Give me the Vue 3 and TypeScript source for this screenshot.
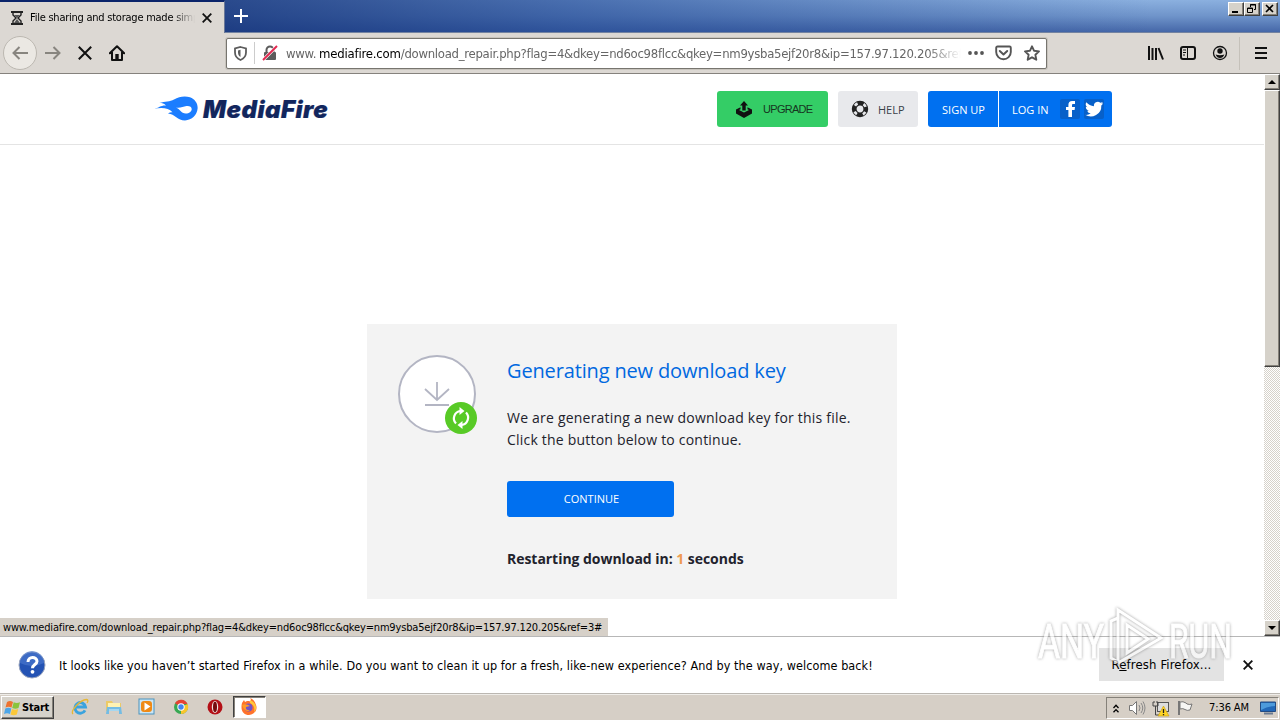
<script setup lang="ts">
import { ref } from 'vue'

const tabTitle = 'File sharing and storage made simple'
const seconds = ref(1)
const urlTail = '/download_repair.php?flag=4&dkey=nd6oc98flcc&qkey=nm9ysba5ejf20r8&ip=157.97.120.205&ref=3'
const statusUrl = 'www.mediafire.com/download_repair.php?flag=4&dkey=nd6oc98flcc&qkey=nm9ysba5ejf20r8&ip=157.97.120.205&ref=3#'
</script>

<template>
  <div class="screen">
    <header class="titlebar">
      <div class="tab">
        <svg class="hourglass" width="12" height="14" viewBox="0 0 12 14"><path d="M0 1h12M0 13h12" stroke="#222" stroke-width="2"/><path d="M2 2v2l3 3-3 3v2M10 2v2L7 7l3 3v2" fill="none" stroke="#222" stroke-width="1.4"/><path d="M3 4h6L6 7zM3 12l3-4 3 4z" fill="#555"/></svg>
        <span class="tab-title">{{ tabTitle }}</span>
        <svg class="tab-close" width="10" height="10" viewBox="0 0 10 10"><path d="M.7.7l8.6 8.6M9.3.7L.7 9.3" stroke="#111" stroke-width="1.8"/></svg>
      </div>
      <svg class="plus" width="14" height="14" viewBox="0 0 14 14"><path d="M7 0v14M0 7h14" stroke="#fff" stroke-width="2"/></svg>
      <div class="win-buttons">
        <span class="bevel"><svg width="12" height="10" viewBox="0 0 12 10"><path d="M2 8h6" stroke="#000" stroke-width="2"/></svg></span>
        <span class="bevel"><svg width="12" height="10" viewBox="0 0 12 10"><path d="M4.500 3V.5h5v5H8M4 1h6M1.500 4h5v4.500h-5zM1 4.500h6" fill="none" stroke="#000"/></svg></span>
        <span class="bevel last"><svg width="12" height="10" viewBox="0 0 12 10"><path d="M2 1l7 7M9 1L2 8" stroke="#000" stroke-width="1.6"/></svg></span>
      </div>
    </header>

    <nav class="toolbar">
      <span class="back"><svg width="16" height="14" viewBox="0 0 16 14"><path d="M16 7H1.500M7.500 1l-6 6 6 6" fill="none" stroke="#88857f" stroke-width="2"/></svg></span>
      <svg class="forward" width="16" height="14" viewBox="0 0 16 14"><path d="M0 7h14.500M8.500 1l6 6-6 6" fill="none" stroke="#88857f" stroke-width="2"/></svg>
      <svg class="stop" width="14" height="14" viewBox="0 0 14 14"><path d="M.8.8l12.400 12.400M13.200.8L.8 13.200" stroke="#111" stroke-width="2"/></svg>
      <svg class="home" width="16" height="16" viewBox="0 0 16 16"><path d="M.8 8.300L8 1.200l7.200 7.100M3 7v8h10V7" fill="none" stroke="#111" stroke-width="2" stroke-linejoin="round" stroke-linecap="round"/><path d="M6.300 14V9h3.400v5z" fill="#111"/></svg>
      <div class="urlbar">
        <svg class="shield" width="13" height="15" viewBox="0 0 13 15"><path d="M6.500 1L12 2.500v4c0 3.600-2.100 6-5.500 7.500C3.100 12.500 1 10.100 1 6.500v-4z" fill="none" stroke="#5c5c5c" stroke-width="1.800"/><path d="M6.500 3.800L4 4.500v2.300c0 2 1 3.300 2.500 4.200z" fill="#5c5c5c"/></svg>
        <i class="url-divider"></i>
        <svg class="lock" width="16" height="16" viewBox="0 0 16 16"><path d="M4.500 8V5a3.500 3.500 0 017 0v3" fill="none" stroke="#5c5c5c" stroke-width="2"/><rect x="2" y="7" width="12" height="8" rx="1" fill="#5c5c5c"/><path d="M1 15L15 1" stroke="#fff" stroke-width="3.200"/><path d="M1 15L15 1" stroke="#e22850" stroke-width="2"/></svg>
        <span class="url">www.<b>mediafire.com</b>{{ urlTail }}</span>
        <svg class="dots" width="16" height="4" viewBox="0 0 16 4"><g fill="#555"><circle cx="2" cy="2" r="1.900"/><circle cx="8" cy="2" r="1.900"/><circle cx="14" cy="2" r="1.900"/></g></svg>
        <svg class="pocket" width="17" height="16" viewBox="0 0 17 16"><path d="M2.500 1.500h12q1.300 0 1.300 1.300V7a7.300 7.300 0 01-14.600 0V2.800q0-1.300 1.300-1.300z" fill="none" stroke="#555" stroke-width="1.900"/><path d="M4.800 6l3.700 3.500L12.200 6" fill="none" stroke="#555" stroke-width="2" stroke-linecap="round" stroke-linejoin="round"/></svg>
        <svg class="star" width="16" height="16" viewBox="0 0 16 16"><path d="M8 1.300l2.100 4.500 4.900.6-3.600 3.400.9 4.900L8 12.300l-4.300 2.400.9-4.900L1 6.400l4.900-.6z" fill="none" stroke="#555" stroke-width="1.900" stroke-linejoin="round"/></svg>
      </div>
      <div class="tools">
        <svg width="16" height="14" viewBox="0 0 16 14"><path d="M1 0v14M4.500 2v12M8 2v12M10.500 2L15 13.500" fill="none" stroke="#111" stroke-width="2"/></svg>
        <svg width="16" height="14" viewBox="0 0 16 14"><rect x="1" y="1" width="14" height="12" rx="2" fill="none" stroke="#111" stroke-width="2"/><path d="M7.500 1v12M3 4h3M3 6.500h3M3 9h2" stroke="#111"/></svg>
        <svg width="16" height="16" viewBox="0 0 16 16"><circle cx="8" cy="8" r="6.500" fill="none" stroke="#111" stroke-width="1.300"/><circle cx="8" cy="6" r="2.700" fill="#111"/><path d="M3.600 9.500q4.400 1.500 8.800 0Q11 13 8 13T3.600 9.500z" fill="#111"/></svg>
      </div>
      <i class="tools-divider"></i>
      <svg class="menu" width="12" height="12" viewBox="0 0 12 12"><path d="M0 1h12M0 6h12M0 11h12" stroke="#111" stroke-width="2"/></svg>
    </nav>

    <div class="viewport">
      <main class="page">
        <header class="site-header">
          <div class="logo">
            <svg class="flame" width="45" height="26" viewBox="0 0 45 26"><path d="M0 12.500C5 12 7 9 12 9.500c-1.600-2-4-2.500-6.500-2.500C11 5 16 6 20 3.500 25 .5 31-.5 36 1.300c5 1.900 8 6.300 7.600 11.300-.5 6.500-5.600 11.800-12.600 11.800-7.500 0-10-6.600-17-7 1.500-1 2.800-1.400 4.500-1.200-4-4.600-10-4.800-18.500-3.700z" fill="#1b7dff"/><path d="M22 11.500c4 1 7-1 10.500-1.400 3-.3 5.200.7 5.200 2.900 0 2.700-2.600 4.500-5.900 4.500-4.800 0-5.800-4.500-9.800-6z" fill="#fff"/></svg>
            <span class="wordmark">MediaFire</span>
          </div>
          <div class="upgrade">
            <svg width="18" height="17" viewBox="0 0 18 17"><path d="M1 8.500l4.500-2.300v2L4 9l5 2.500L14 9l-1.500-.8v-2L17 8.500v4L9 17l-8-4.500z" fill="#111"/><path d="M9 0l4 4.500h-2.300V9.500H7.300V4.500H5z" fill="#111"/></svg>
            <span>UPGRADE</span>
          </div>
          <div class="help">
            <svg width="18" height="18" viewBox="0 0 18 18"><circle cx="9" cy="9" r="5.800" fill="none" stroke="#222" stroke-width="4.800"/><circle cx="9" cy="9" r="6" fill="none" stroke="#e8e9ec" stroke-width="2.600" stroke-dasharray="3.400 6.025" transform="rotate(28.800 9 9)"/></svg>
            <span>HELP</span>
          </div>
          <div class="account">
            <span class="signup">SIGN UP</span>
            <span class="login">LOG IN</span>
            <span class="social"><svg width="20" height="20" viewBox="0 0 20 20"><path d="M8.400 18v-7H6V8h2.400V6c0-2.700 1.300-4 3.700-4H15v3h-1.700C12 5 12 5.600 12 6.500V8h3l-.4 3H12v7z" fill="#fff"/></svg></span>
            <span class="social tw"><svg width="20" height="20" viewBox="0 0 24 24"><path d="M23 5.200a9 9 0 01-2.500.7 4.400 4.400 0 001.900-2.400 9 9 0 01-2.800 1.100 4.500 4.500 0 00-7.600 4.100A12.700 12.700 0 012.800 4a4.500 4.500 0 001.400 6 4.400 4.400 0 01-2-.6 4.500 4.500 0 003.600 4.500 4.400 4.400 0 01-2 .1 4.500 4.500 0 004.200 3.100A9 9 0 011.300 19a12.700 12.700 0 0019.500-11.300A9 9 0 0023 5.200z" fill="#fff"/></svg></span>
          </div>
        </header>

        <section class="card">
          <svg class="download" width="80" height="80" viewBox="0 0 80 80"><circle cx="39" cy="39" r="38" fill="#fff" stroke="#b3b5c3" stroke-width="2"/><path d="M39 27v18M27 34l12 11 12-11M27 50h24" fill="none" stroke="#b3b5c3" stroke-width="1.800"/><circle cx="63" cy="63" r="16" fill="#58ca26"/><g fill="none" stroke="#fff" stroke-width="2.200"><path d="M58 68.500A7.400 7.400 0 0162.500 56M68 57.500A7.400 7.400 0 0163.500 70"/></g><path d="M61.500 52l5 4-5 4zM64.500 66v8l-5-4z" fill="#fff"/></svg>
          <div class="card-body">
            <h1>Generating new download key</h1>
            <p><span class="line">We are generating a new download key for this file.</span><span class="line">Click the button below to continue.</span></p>
            <div class="continue"><span>CONTINUE</span></div>
            <div class="restart">Restarting download in: <em>{{ seconds }}</em> seconds</div>
          </div>
        </section>
      </main>
      <aside class="scrollbar">
        <span class="bevel arrow"><svg width="8" height="4" viewBox="0 0 8 4"><path d="M0 4l4-4 4 4z"/></svg></span>
        <span class="bevel thumb"></span>
        <span class="bevel arrow down"><svg width="8" height="4" viewBox="0 0 8 4"><path d="M0 0h8L4 4z"/></svg></span>
      </aside>
      <div class="status"><span>{{ statusUrl }}</span></div>
    </div>

    <section class="notice">
      <svg class="question" width="28" height="28" viewBox="0 0 28 28"><circle cx="14" cy="14" r="13" fill="#2453b4" stroke="#9aa5bd"/><path d="M2 12a12 12 0 0124 0q-12 6-24 0z" fill="#4f7bd0" opacity=".6"/><path d="M10 11c0-6 9-5.500 9-.8 0 3.300-4.500 3.300-4.500 7" fill="none" stroke="#fff" stroke-width="3"/><circle cx="14.500" cy="20.800" r="1.900" fill="#fff"/></svg>
      <span class="notice-text">It looks like you haven’t started Firefox in a while. Do you want to clean it up for a fresh, like-new experience? And by the way, welcome back!</span>
      <div class="refresh"><span>R<u>e</u>fresh Firefox...</span></div>
      <svg class="dismiss" width="10" height="10" viewBox="0 0 10 10"><path d="M.7.7l8.600 8.600M9.300.7L.7 9.300" stroke="#111" stroke-width="1.900"/></svg>
    </section>

    <footer class="taskbar">
      <div class="start bevel">
        <svg width="17" height="16" viewBox="0 0 17 16"><path d="M3 2q3-2 6 0L7.500 7.500q-3-1.500-6 0z" fill="#ee7330"/><path d="M9.700 2.300q3 1.500 6.300 0L14.500 8q-3 1.500-6.300 0z" fill="#8ac43d"/><path d="M1.300 8.400q3-1.500 6 0L6 14q-3-1.500-6 0z" fill="#4da6e8"/><path d="M8 9q3 1.500 6.200 0l-1.400 5.500q-3 1.500-6.300 0z" fill="#fbc83a"/></svg>
        <b>Start</b>
      </div>
      <div class="launchers">
        <svg width="18" height="18" viewBox="0 0 18 18"><path d="M14 12.300A5.300 5.300 0 1114.500 9H5" fill="none" stroke="#3aa3de" stroke-width="2.900"/><path d="M2 16C-1 13 9 2 15.500 1.500c2 0 1.500 2 .5 3.500" fill="none" stroke="#e6b735" stroke-width="1.300"/></svg>
        <svg width="18" height="18" viewBox="0 0 18 18"><path d="M1 3h6l1 2h8v8H1z" fill="#ecca67"/><path d="M3 5h12v5H3z" fill="#fff2b2"/><path d="M2 9h14l1 7h-3v-3H4v3H1z" fill="#74bce4"/><path d="M4 12h10" stroke="#d7f1fc"/></svg>
        <svg width="18" height="18" viewBox="0 0 18 18"><rect x="1" y="1" width="15" height="15" fill="#cce6f5" stroke="#4a93bd"/><rect x="3" y="3" width="11" height="11" rx="3" fill="#ef8a16"/><path d="M6.500 4.500l6 4-6 4z" fill="#fff"/></svg>
        <svg width="18" height="18" viewBox="0 0 18 18"><circle cx="9" cy="9" r="7" fill="#38a852"/><path d="M9 9L3 5.300A7 7 0 0115.500 6H9z" fill="#e64234"/><path d="M9 9l6.500-3A7 7 0 019 16z" fill="#f9c52b"/><circle cx="9" cy="9" r="3.700" fill="#fff"/><circle cx="9" cy="9" r="2.700" fill="#4385ef"/></svg>
        <svg width="18" height="18" viewBox="0 0 18 18"><circle cx="9" cy="9" r="7.500" fill="#b40f16"/><ellipse cx="9" cy="9" rx="3.200" ry="6" fill="#eee3df"/><ellipse cx="9" cy="9" rx="2" ry="5.200" fill="#760b0e"/></svg>
      </div>
      <div class="active-app">
        <svg width="18" height="18" viewBox="0 0 18 18"><path d="M2 5l2-3 1 2 2-1c2-.2 3 .3 4 1 0-2 0-3-1-4 3 1 5 3.500 6 7 2 5-2 10-7 10S0 13 2 5z" fill="#ff722b"/><path d="M10 2c6 2 8 9 4 12 1-4 0-7-4-9z" fill="#ffc93b"/><circle cx="8.500" cy="9.500" r="4" fill="#7354c7"/><path d="M2 7q4-2 8 1l-4 1q-1 3 4 3.500Q5 15 2 7z" fill="#ff9a27"/></svg>
      </div>
      <div class="tray">
        <svg class="chev" width="6" height="9" viewBox="0 0 6 9"><path d="M.5 4L3 1.300 5.500 4M.5 8.300L3 5.600l2.500 2.700" fill="none" stroke="#000" stroke-width="1.300"/></svg>
        <svg class="sound" width="18" height="16" viewBox="0 0 18 16"><path d="M1.500 5.500h3l4-4v13l-4-4h-3z" fill="#fff" stroke="#777"/><path d="M11 5q2 3 0 6M13 3q3.500 5 0 10M15 1.500q4 6.500 0 13" fill="none" stroke="#888"/></svg>
        <svg class="net" width="18" height="17" viewBox="0 0 18 17"><rect x="5.500" y="2.500" width="11" height="9" fill="#ddd" stroke="#555"/><path d="M1 2v4h5V2M2 1v2M5 1v2M3.500 6v9H7" fill="none" stroke="#444"/><path d="M11.500 6l5.500 10H6z" fill="#ffd526" stroke="#c49a13" stroke-width=".6"/><path d="M11.500 9v4M11.500 14v1.200" stroke="#222" stroke-width="1.300"/></svg>
        <svg class="flag" width="16" height="16" viewBox="0 0 16 16"><path d="M2 1v14" stroke="#777" stroke-width="2"/><path d="M3 2q3-1 6 1l1 1q3 1 5 0l-2 6q-3 1-5-.500-2-1.500-5-.5z" fill="#f6f6f4" stroke="#777"/></svg>
        <span class="clock">7:36 AM</span>
        <svg class="desktop" width="16" height="14" viewBox="0 0 16 14"><path d="M.5 1h15v9.500H.5z" fill="#2268b8" stroke="#234b83"/><path d="M1 2l14 0v3Q8 5 1 9z" fill="#4d9adb"/><path d="M4 12.500h9" stroke="#6b7a91" stroke-width="2"/></svg>
      </div>
    </footer>

    <div class="watermark">
      <svg width="200" height="68" viewBox="0 0 200 68"><g class="mark-text"><text x="3" y="53" textLength="66" lengthAdjust="spacingAndGlyphs">ANY</text><text x="134" y="53" textLength="63" lengthAdjust="spacingAndGlyphs">RUN</text></g><path d="M83 13v44l-7-4V16l7-3v-8l43 28-43 25M92 20v28l21-14z"/></svg>
    </div>
  </div>
</template>

<style>
body { margin: 0; overflow: hidden; background: #fff; }
</style>

<style scoped>
* { box-sizing: border-box; }
svg { display: block; flex: none; }
.screen { position: relative; width: 1280px; height: 720px; display: flex; flex-direction: column; background: #fff; overflow: hidden; font: 11px/14px "DejaVu Sans Condensed", "DejaVu Sans", sans-serif; color: #000; white-space: nowrap; }
.titlebar { height: 33px; flex: none; display: flex; background: linear-gradient(90deg, rgba(15,43,112,.95), rgba(31,69,145,.6) 45%, rgba(80,130,195,0) 90%), linear-gradient(#8bb0df, #6f94ca 50%, #4567a8); border-bottom: 1px solid #7383a1; }
.tab { width: 225px; height: 33px; border-top: 2px solid #0a246a; border-right: 1px solid #6a7897; background: #dcd8d3; display: flex; align-items: center; padding-left: 11px; }
.tab-title { width: 165px; margin-left: 7px; overflow: hidden; font-size: 11px; letter-spacing: -.24px; -webkit-mask-image: linear-gradient(90deg, #000 86%, transparent); mask-image: linear-gradient(90deg, #000 86%, transparent); }
.tab-close { margin-left: 7px; }
.plus { margin: 9px 0 0 9px; }
.win-buttons { display: flex; margin: 2px 2px 0 auto; height: 14px; }
.bevel { background: #d6d2ca; border: 1px solid; border-color: #fff #404040 #404040 #fff; box-shadow: inset -1px -1px #858179; }
.win-buttons .bevel { width: 16px; height: 14px; padding: 1px; }
.win-buttons .last { margin-left: 2px; }
.toolbar { height: 41px; flex: none; display: flex; align-items: center; background: #dcd8d3; border-bottom: 1px solid #85827d; }
.back { width: 34px; height: 34px; margin-left: 3px; border: 1px solid #bcb8b1; border-radius: 50%; background: #ebe8e3; display: grid; place-items: center; }
.forward { margin-left: 8px; }
.stop { margin-left: 17px; }
.home { margin-left: 17px; }
.urlbar { width: 821px; height: 31px; margin-left: 101px; padding-left: 7px; border: 1px solid #77756f; border-radius: 2px; background: #fff; display: flex; align-items: center; box-shadow: 0 0 0 1px #c8c4bd; }
.url-divider { width: 1px; height: 22px; margin: 0 7px; background: #ccc; }
.lock { margin-right: 8px; }
.url { width: 675px; margin-top: 1px; overflow: hidden; color: #666; font: 13px/18px "DejaVu Sans Condensed", sans-serif; letter-spacing: -.28px; -webkit-mask-image: linear-gradient(90deg, #000 95%, transparent); mask-image: linear-gradient(90deg, #000 95%, transparent); }
.url b { font-weight: 400; color: #000; letter-spacing: -.2px; margin-left: 3px; }
.dots { margin-left: 7px; }
.pocket { margin-left: 11px; }
.star { margin-left: 12px; }
.tools { display: flex; align-items: center; gap: 16px; margin-left: 101px; }
.tools-divider { width: 1px; height: 33px; margin: 0 15px 0 11px; background: #c5c1ba; }
.viewport { position: relative; height: 562px; flex: none; display: flex; }
.page { width: 1264px; }
.site-header { height: 71px; border-bottom: 1px solid #e4e4e4; display: flex; align-items: center; padding-left: 155px; font-family: "Open Sans", sans-serif; font-size: 11px; }
.logo { display: flex; align-items: center; width: 562px; }
.flame { margin: -1px 0 0 -1px; }
.wordmark { margin: 1px 0 0 4px; font: italic 900 24px/30px Inter, "Liberation Sans", sans-serif; letter-spacing: .5px; color: #12265d; -webkit-text-stroke: .2px #12265d; }
.upgrade, .help, .account, .signup, .login { height: 36px; display: flex; align-items: center; }
.upgrade { width: 111px; border-radius: 3px; background: #34cd66; color: #17351f; padding-left: 18px; font-family: "Liberation Sans", sans-serif; }
.upgrade span { margin-left: 10px; font-size: 11px; letter-spacing: -.7px; }
.help { width: 80px; margin-left: 10px; border-radius: 3px; background: #e8e9ec; color: #3b4148; padding-left: 13px; }
.help span { margin: 1px 0 0 9px; }
.account { width: 184px; margin-left: 10px; border-radius: 3px; background: #0070f0; color: #fff; }
.signup { width: 71px; justify-content: center; border-right: 1px solid #fff; padding: 1px 0 0 1px; }
.login { width: 61px; padding: 1px 0 0 13px; }
.social { width: 20px; height: 20px; background: #0760c9; border-radius: 2px; }
.tw { margin-left: 4px; }
.card { width: 530px; height: 275px; margin: 179px 0 0 367px; display: flex; padding: 31px 0 0 31px; background: #f3f3f3; color: #22222c; font-family: "Open Sans", sans-serif; }
.card-body { margin-left: 29px; }
h1 { margin: 1px 0 0; font-size: 20px; font-weight: 400; line-height: 30px; letter-spacing: -.15px; color: #0068e0; }
p { margin: 21px 0 0; font-size: 14px; line-height: 22px; letter-spacing: .21px; }
.line { display: block; width: max-content; }
.continue { width: 167px; height: 36px; margin-top: 30px; background: #0070f0; border-radius: 3px; display: grid; place-items: center; color: #fff; font-size: 11px; padding-left: 2px; }
.restart { margin-top: 32px; font-weight: 700; font-size: 14px; line-height: 20px; letter-spacing: -.04px; }
.restart em { font-style: normal; color: #ef9b50; }
.scrollbar { width: 16px; display: flex; flex-direction: column; background: repeating-conic-gradient(#fff 0 25%, #d6d2ca 0 50%) 0 0 / 2px 2px; }
.arrow { height: 16px; display: grid; place-items: center; }
.thumb { height: 277px; }
.down { margin-top: auto; }
.status { position: absolute; left: 0; bottom: 0; width: 608px; height: 18px; background: #d6d0c8; padding: 3px 3px 0; letter-spacing: -.16px; }
.status span, .notice-text, .refresh span { display: inline-block; }
.notice { height: 57px; flex: none; border-top: 1px solid #b7b7b7; display: flex; align-items: center; font-size: 12.500px; }
.question { margin-left: 18px; }
.notice-text { width: 1027px; margin: 1px 0 0 13px; letter-spacing: .085px; }
.refresh { width: 125px; height: 33px; margin: -1px 0 0 13px; padding-top: 1px; background: #e3e3e3; display: grid; place-items: center; font-size: 13px; letter-spacing: .13px; }
.dismiss { margin-left: 19px; }
.taskbar { height: 27px; flex: none; display: flex; background: #d6cfc6; border-top: 1px solid #bbb7b1; box-shadow: inset 0 1px #efede9; padding-top: 2px; }
.start { width: 53px; height: 23px; margin: 0 0 0 1px; display: flex; align-items: center; padding-left: 2px; gap: 1px; }
.start b { font-size: 11px; letter-spacing: -.2px; }
.launchers { display: flex; gap: 15.700px; margin: 2px 0 0 17px; }
.active-app { width: 33px; height: 22px; margin-left: 9px; background: #fff; border: 1px solid; border-color: #404040 #fff #fff #404040; box-shadow: inset 1px 1px #858179; display: grid; place-items: center; }
.tray { width: 173px; height: 22px; margin: 1px 1px 0 auto; border: 1px solid; border-color: #858179 #fff #fff #858179; display: flex; align-items: center; padding-left: 6px; }
.sound { margin-left: 9px; }
.net { margin-left: 6px; }
.flag { margin-left: 7px; }
.clock { width: 42px; margin-left: 16px; letter-spacing: -.1px; }
.desktop { margin-left: 9px; }
.watermark { position: absolute; left: 1035px; top: 605px; opacity: .65; }
.watermark path { fill: none; stroke: #fff; stroke-width: 3; filter: drop-shadow(0 0 1.500px #666); }
.mark-text text { font: 400 48px Roboto, sans-serif; fill: #fff; stroke: #fff; stroke-width: 1; filter: drop-shadow(0 0 1.500px #777); }
</style>
